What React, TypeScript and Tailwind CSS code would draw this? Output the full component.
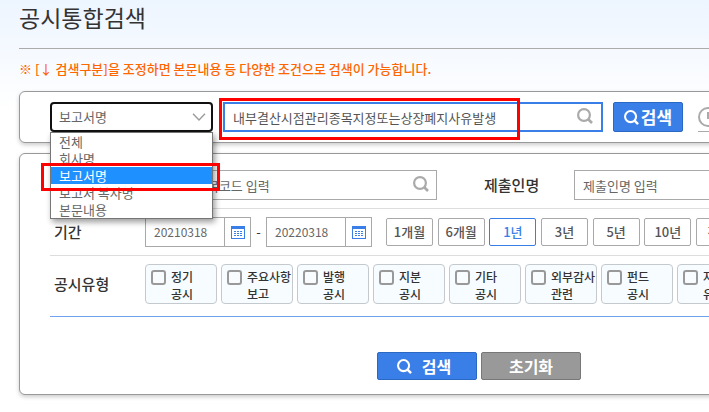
import React, { useState } from "react";

const searchKinds = ["전체", "회사명", "보고서명", "보고서 복사명", "본문내용"];
const periods = ["1개월", "6개월", "1년", "3년", "5년", "10년", "전체"];
const reportTypes = [
  ["정기", "공시"],
  ["주요사항", "보고"],
  ["발행", "공시"],
  ["지분", "공시"],
  ["기타", "공시"],
  ["외부감사", "관련"],
  ["펀드", "공시"],
  ["자산", "유동화"],
  ["거래소", "공시"],
  ["공정위", "공시"],
];

function SearchIcon({ className }: { className: string }) {
  return (
    <svg viewBox="0 0 16 16" fill="none" stroke="currentColor" strokeWidth="2.2" className={className} aria-hidden="true">
      <circle cx="7" cy="7" r="5.9" />
      <path d="M11 11 15 15" strokeWidth="2.6" />
    </svg>
  );
}

function CalendarIcon() {
  return (
    <svg viewBox="0 0 14 13" className="h-[13px] w-[14px]" shapeRendering="crispEdges" aria-hidden="true">
      <rect x="0.5" y="0.5" width="13" height="12" fill="#fff" stroke="#3a7fe8" />
      <rect x="0" y="0" width="14" height="3" fill="#3a7fe8" />
      <g fill="#3a7fe8">
        {[5, 7, 9].map((y) => [3, 6, 9].map((x) => <rect key={x + "-" + y} x={x} y={y} width="2" height="1" />))}
      </g>
    </svg>
  );
}

function DateField({ label, value }: { label: string; value: string }) {
  return (
    <div className="flex h-[30px] w-[106px] border border-[#a9a9a9] bg-white">
      <input aria-label={label} defaultValue={value} className="w-[78px] pl-2 text-xs text-[#666] outline-none" />
      <button type="button" aria-label={label + " 달력"} className="flex flex-1 items-center justify-center border-l border-[#a9a9a9]">
        <CalendarIcon />
      </button>
    </div>
  );
}

export default function App() {
  const [kind, setKind] = useState("보고서명");
  const [period, setPeriod] = useState("1년");

  return (
    <div className="w-full overflow-hidden bg-white bg-linear-to-b from-[#edf5ff] to-white to-[110px] pb-[17px] pl-[19px] font-['Noto_Sans_CJK_KR','Noto_Sans',sans-serif] text-[13px] text-[#333]">
      <main className="min-w-[920px]">
        <h1 className="h-[49px] border-b border-[#aaa] text-[23px] leading-[34px]">공시통합검색</h1>
        <p className="h-[42px] text-[13px] leading-10 font-medium text-[#ff6600]">
          ※ [↓ 검색구분]을 조정하면 본문내용 등 다양한 조건으로 검색이 가능합니다.
        </p>

        <section className="flex items-start rounded-md border border-[#999] bg-white px-[30px] py-[10px] shadow-[0_2px_4px_rgba(0,0,0,0.2)]">
          <div className="relative z-10 w-[163px]">
            <select
              aria-label="검색구분"
              value={kind}
              onChange={(e) => setKind(e.target.value)}
              className="block h-[30px] w-full appearance-none rounded border-2 border-[#101010] bg-white pl-[7px] text-[#666] outline-none"
            >
              {searchKinds.map((k) => (
                <option key={k}>{k}</option>
              ))}
            </select>
            <svg viewBox="0 0 14 8" fill="none" stroke="#999" strokeWidth="1.3" className="pointer-events-none absolute top-[11px] right-[7px] h-2 w-[14px]" aria-hidden="true">
              <path d="M1 .8 7 7 13 .8" />
            </svg>
            <ul className="absolute top-[30px] left-0 w-full border border-[#767676] bg-white text-[#666] shadow-[2px_3px_6px_rgba(0,0,0,0.4)]">
              {searchKinds.map((k) => (
                <li key={k} className={k === kind ? "h-[17px] bg-[#1e90ff] pl-2 leading-[17px] text-white" : "h-[17px] pl-2 leading-[17px]"}>
                  {k}
                </li>
              ))}
            </ul>
            <div className="pointer-events-none absolute top-[61px] -left-[9px] h-[28px] w-[179px] border-3 border-[#ff0000]" />
          </div>
          <div className="relative ml-[10px] w-[380px]">
            <input
              aria-label="검색어"
              defaultValue="내부결산시점관리종목지정또는상장폐지사유발생"
              className="block h-[30px] w-full border-2 border-[#3a7fe8] bg-white pr-9 pl-2 text-[#555] outline-none"
            />
            <SearchIcon className="absolute top-[6px] right-[10px] h-4 w-4 text-[#aaa]" />
            <div className="pointer-events-none absolute -top-1 -left-1 h-[42px] w-[301px] border-3 border-[#ff0000]" />
          </div>
          <button type="button" className="ml-[10px] flex h-[30px] w-[70px] items-center justify-center gap-[2px] rounded-xs border border-[#2a68c4] bg-[#3a7fe8] text-[17px] font-bold text-white">
            <SearchIcon className="h-[15px] w-[15px]" />
            검색
          </button>
          <button type="button" className="ml-[15px] flex h-[30px] items-center gap-1 border-b border-[#aaa] font-medium text-[#666]">
            <svg viewBox="0 0 20 20" fill="none" stroke="#aaa" strokeWidth="2" className="h-5 w-5" aria-hidden="true">
              <circle cx="10" cy="10" r="9" />
              <path d="M10 5v6h4" />
            </svg>
            최근검색어
          </button>
        </section>

        <section className="mt-[10px] rounded-md border border-[#999] bg-white px-[30px] pt-2 pb-[14px] shadow-[0_2px_4px_rgba(0,0,0,0.2)]">
          <div className="flex h-[47px] items-center border-b border-[#ddd]">
            <label htmlFor="company" className="w-[95px] pl-1 text-[15px] font-medium">회사명</label>
            <div className="relative w-[292px]">
              <input
                id="company"
                placeholder="회사명/종목코드 입력"
                className="block h-[30px] w-full border border-[#a9a9a9] bg-white pl-2 outline-none placeholder:text-[#666]"
              />
              <SearchIcon className="absolute top-[6px] right-[8px] h-4 w-4 text-[#aaa]" />
            </div>
            <label htmlFor="submitter" className="ml-[47px] w-[90px] text-[15px] font-medium">제출인명</label>
            <input
              id="submitter"
              placeholder="제출인명 입력"
              className="h-[30px] w-[292px] border border-[#a9a9a9] bg-white pl-2 outline-none placeholder:text-[#666]"
            />
          </div>

          <div className="flex h-[47px] items-center border-b border-[#ddd]">
            <span className="w-[95px] pl-1 text-[15px] font-medium">기간</span>
            <DateField label="시작일" value="20210318" />
            <span className="w-[15px] text-center">-</span>
            <DateField label="종료일" value="20220318" />
            <div className="ml-[14px] flex w-[357px] justify-between">
              {periods.map((p) => (
                <button
                  key={p}
                  type="button"
                  onClick={() => setPeriod(p)}
                  className={
                    p === period
                      ? "h-7 w-[47px] rounded-xs border border-[#3a7fe8] bg-white font-medium text-[#3a7fe8]"
                      : "h-7 w-[47px] rounded-xs border border-[#a9a9a9] bg-white font-medium text-[#555]"
                  }
                >
                  {p}
                </button>
              ))}
            </div>
          </div>

          <div className="flex items-center border-b border-[#6fa3ee] pt-2 pb-3">
            <span className="w-[95px] pl-1 text-[15px] font-medium">공시유형</span>
            <div className="flex gap-1">
              {reportTypes.map(([first, second]) => (
                <label key={first + second} className="flex h-10 w-[72px] gap-[5px] rounded border border-[#c3c9cc] bg-[#f6fcff] pt-[3px] pl-[5px] text-xs leading-[17px] font-medium whitespace-nowrap">
                  <input type="checkbox" className="mt-[2px] h-[15px] w-[15px] shrink-0 appearance-none rounded-[3px] border-2 border-[#999] bg-[#f8fcff]" />
                  <span>
                    {first}
                    <br />
                    {second}
                  </span>
                </label>
              ))}
            </div>
          </div>

          <div className="mt-[35px] flex justify-center gap-1 text-base font-bold text-white">
            <button type="button" className="flex h-7 w-[100px] items-center justify-center gap-[10px] rounded-xs border border-[#2a68c4] bg-[#3a7fe8] pr-[6px]">
              <SearchIcon className="h-[15px] w-[15px]" />
              검색
            </button>
            <button type="button" className="flex h-7 w-[100px] items-center justify-center rounded-xs border border-[#777] bg-[#999]">초기화</button>
          </div>
        </section>
      </main>
    </div>
  );
}
